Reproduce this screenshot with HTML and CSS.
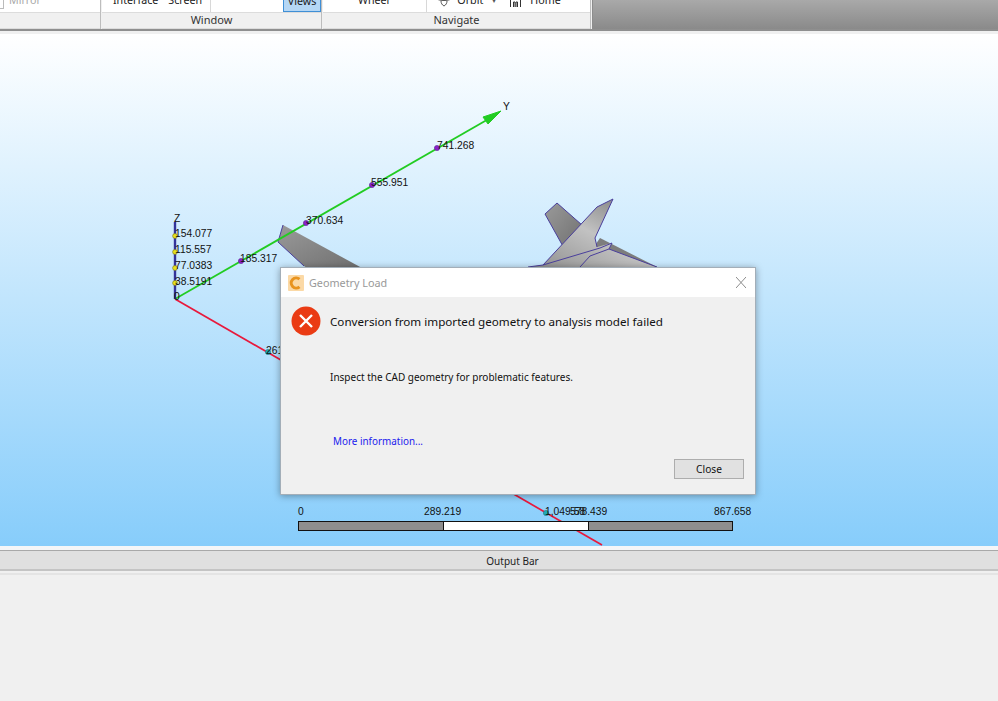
FILE: index.html
```html
<!DOCTYPE html>
<html lang="en">
<head>
  <meta charset="UTF-8" />
  <title>Geometry Load</title>
  <link rel="stylesheet" href="styles.css">
</head>
<body>
  <div class="ribbon">
    <div class="group group-edit">
      <div class="tools"><span class="checkbox"></span><span class="tool-muted">Mirror</span></div>
      <div class="group-label"></div>
    </div>
    <div class="group group-window">
      <div class="tools">
        <span class="tool tool-interface">Interface</span>
        <span class="tool tool-screen">Screen</span>
        <span class="tool-sep"></span>
        <span class="views-btn">Views</span>
      </div>
      <div class="group-label">Window</div>
    </div>
    <div class="group group-navigate">
      <div class="tools">
        <span class="tool tool-wheel">Wheel</span>
        <span class="tool-sep"></span>
        <svg class="tool-icon icon-orbit" width="16" height="8" viewBox="0 0 16 8"><path d="M1 0c3 2 11 2 14 0M5 2c0 2 1 4 3 5 2-1 3-3 3-5" fill="none" stroke="#555" stroke-width="1"/></svg>
        <span class="tool tool-orbit">Orbit</span>
        <span class="tool-arrow">▾</span>
        <svg class="tool-icon icon-home" width="11" height="7" viewBox="0 0 11 7"><path d="M.5 7V0M10.5 7V0M3.5 7V2h1.500v5M6 7V2h1.500v5" fill="none" stroke="#333" stroke-width="1"/></svg>
        <span class="tool tool-home">Home</span>
      </div>
      <div class="group-label">Navigate</div>
    </div>
    <div class="ribbon-empty"></div>
  </div>
  <div class="ribbon-strip"></div>

  <div class="viewport">
    <svg class="scene" width="998" height="512" viewBox="0 34 998 512">
      <defs>
        <linearGradient id="wingA" x1="0" y1="0" x2="1" y2="1">
          <stop offset="0" stop-color="#9a9a9a"/>
          <stop offset="1" stop-color="#6f6f6f"/>
        </linearGradient>
        <linearGradient id="wingB" x1="0" y1="1" x2="1" y2="0">
          <stop offset="0" stop-color="#8d8d8d"/>
          <stop offset="0.5" stop-color="#c2c2c2"/>
          <stop offset="1" stop-color="#6e6e6e"/>
        </linearGradient>
      </defs>

      <!-- model -->
      <path d="M283 225 L278 242 L304 266 L307 268 L362 268 Z" fill="url(#wingA)"/>
      <path d="M283 225 L278 242 L304 266" fill="none" stroke="#4a3f9c" stroke-width="1"/>
      <path d="M545 214 L557 203 L582 225 L565 250 Z" fill="url(#wingA)" stroke="#4a3f9c" stroke-width="1"/>
      <path d="M600 238 L657 267 L580 267 Z" fill="#7d7d7d"/>
      <path d="M528 267 L543 265 L597 207 L613 199 L595 238 L597 247 L612 243 L609 249 L657 267 L528 267 Z" fill="url(#wingB)"/>
      <path d="M528 267 L543 265 L597 207 L613 199 L595 238 L597 247 M543 265 L600 248 L612 243 L609 249 L657 267 M609 249 L590 256 L580 267" fill="none" stroke="#4a3f9c" stroke-width="1"/>

      <!-- axes -->
      <line x1="175" y1="299" x2="602" y2="545" stroke="#e8193c" stroke-width="1.7"/>
      <line x1="175" y1="299" x2="492" y2="117" stroke="#22cc22" stroke-width="1.8"/>
      <path d="M501 111 L483 117 L488 124 Z" fill="#22cc22" stroke="#22cc22" stroke-width="1"/>
      <line x1="175" y1="299" x2="175" y2="222" stroke="#33339a" stroke-width="2.4"/>

      <circle class="tick-y" cx="175" cy="236" r="2.4"/>
      <circle class="tick-y" cx="175" cy="252" r="2.4"/>
      <circle class="tick-y" cx="175" cy="268" r="2.4"/>
      <circle class="tick-y" cx="175" cy="283" r="2.4"/>
      <circle class="tick-p" cx="241" cy="261" r="2.6"/>
      <circle class="tick-p" cx="306" cy="223" r="2.6"/>
      <circle class="tick-p" cx="372" cy="185" r="2.6"/>
      <circle class="tick-p" cx="437" cy="148" r="2.6"/>
      <circle class="tick-t" cx="268" cy="352" r="2.6"/>
      <circle class="tick-t" cx="546" cy="513" r="2.6"/>

      <text x="174" y="222">Z</text>
      <text x="175" y="237">154.077</text>
      <text x="175" y="253">115.557</text>
      <text x="175" y="269">77.0383</text>
      <text x="175" y="285">38.5191</text>
      <text x="174" y="300">0</text>
      <text x="240" y="262">185.317</text>
      <text x="306" y="224">370.634</text>
      <text x="371" y="186">555.951</text>
      <text x="437" y="149">741.268</text>
      <text x="503" y="110">Y</text>
      <text x="266" y="354">261</text>

      <!-- scale bar -->
      <text x="298" y="515">0</text>
      <text x="424" y="515">289.219</text>
      <text x="545" y="515">1,049.58</text>
      <text x="570" y="515">578.439</text>
      <text x="714" y="515">867.658</text>
      <rect x="298.5" y="521.5" width="145" height="9" fill="#8e8e8e" stroke="#111"/>
      <rect x="443.5" y="521.5" width="145" height="9" fill="#fff" stroke="#111"/>
      <rect x="588.5" y="521.5" width="144" height="9" fill="#8e8e8e" stroke="#111"/>
    </svg>

    <div class="dialog">
      <div class="dialog-title">
        <svg class="app-icon" width="16" height="16" viewBox="0 0 16 16">
          <rect width="16" height="16" rx="1" fill="#fbd9a6"/>
          <path d="M11.5 4.2A5 5 0 1 0 11.500 11.800" fill="none" stroke="#e8931e" stroke-width="3"/>
        </svg>
        <span class="dialog-name">Geometry Load</span>
        <svg class="dialog-x" width="10" height="11" viewBox="0 0 10 11"><path d="M0 0L10 11M10 0L0 11" stroke="#8c8c8c" stroke-width="1"/></svg>
      </div>
      <div class="dialog-body">
        <div class="message">
          <svg class="error-icon" width="30" height="30" viewBox="0 0 30 30">
            <circle cx="15" cy="15" r="14.5" fill="#ea3b14"/>
            <path d="M9 9L21 21M21 9L9 21" stroke="#fff" stroke-width="2.4"/>
          </svg>
          <span class="message-text">Conversion from imported geometry to analysis model failed</span>
        </div>
        <p class="detail">Inspect the CAD geometry for problematic features.</p>
        <a class="more-link">More information...</a>
        <div class="dialog-actions"><button class="close-btn">Close</button></div>
      </div>
    </div>
  </div>

  <div class="splitter"></div>
  <div class="output-head">Output Bar</div>
  <div class="output-gap"></div>
  <div class="output-pane"></div>
</body>
</html>
```

FILE: styles.css
```css
html, body {
  margin: 0;
  height: 100%;
}
body {
  width: 998px;
  height: 701px;
  overflow: hidden;
  display: flex;
  flex-direction: column;
  background: #f0f0f0;
  font-family: 'Noto Sans', 'Open Sans', sans-serif;
  font-size: 11px;
  color: #1a1a1a;
}

/* ribbon, cut off at the top of the shot */
.ribbon {
  display: flex;
  height: 29px;
  flex: none;
  border-bottom: 2px solid #8f8f8f;
}
.group {
  display: flex;
  flex-direction: column;
  border-right: 1px solid #bdbdbd;
  margin-right: 1px;
}
.group-edit { width: 100px; }
.group-window { width: 219px; }
.group-navigate { width: 267px; }
.tools {
  height: 12px;
  display: flex;
  align-items: flex-end;
  overflow: hidden;
  background: #fff;
  border-bottom: 1px solid #dcdcdc;
  font-size: 10.7px;
  line-height: 12px;
}
.group-label {
  height: 15px;
  line-height: 13px;
  text-align: center;
  background: #f0f0f0;
  border-bottom: 1px solid #dcdcdc;
  color: #333;
}
.checkbox {
  width: 3px;
  height: 8px;
  margin-bottom: 3px;
  border: 1px solid #bbb;
  border-left: 0;
}
.tool-muted {
  color: #a8a8a8;
  margin: 0 0 6px 5px;
}
.tool {
  margin-bottom: 6px;
  white-space: nowrap;
}
.tool-interface { margin-left: 11px; }
.tool-screen { margin-left: 10px; }
.tool-sep {
  width: 1px;
  height: 12px;
  background: #d8d8d8;
}
.group-window .tool-sep { margin-left: 8px; }
.views-btn {
  margin-left: 72px;
  width: 36px;
  height: 11px;
  line-height: 3px;
  text-align: center;
  background: #b5d7f5;
  border: 1px solid #3f8fd6;
  border-top: 0;
}
.tool-wheel { margin-left: 35px; }
.group-navigate .tool-sep { margin-left: 37px; }
.tool-icon { flex: none; }
.icon-orbit { margin: 0 0 5px 9px; }
.tool-orbit { margin-left: 5px; }
.tool-arrow {
  margin: 0 0 6px 9px;
  font-size: 8px;
  color: #555;
}
.icon-home { margin: 0 0 5px 14px; }
.tool-home { margin-left: 9px; }
.ribbon-empty {
  flex: 1;
  background: linear-gradient(#a9a9a9, #8a8a8a);
  border-left: 1px solid #8c8c8c;
}
.ribbon-strip {
  height: 3px;
  flex: none;
  background: #f0f0f0;
}

/* 3d view */
.viewport {
  position: relative;
  height: 512px;
  flex: none;
  background: linear-gradient(#fff, #87cdfb);
  overflow: hidden;
}
.scene {
  display: block;
}
.scene text {
  font-family: 'Liberation Sans', Arial, sans-serif;
  font-size: 10.3px;
  fill: #111;
}
.tick-y { fill: #e8e21c; stroke: #77761a; stroke-width: 0.6; }
.tick-p { fill: #8a1fc9; stroke: #5a2a90; stroke-width: 0.6; }
.tick-t { fill: #22a9b5; stroke: #1b7a86; stroke-width: 0.6; }

/* dialog over the view */
.dialog {
  position: absolute;
  left: 280px;
  top: 233px;
  width: 476px;
  height: 228px;
  box-sizing: border-box;
  display: flex;
  flex-direction: column;
  border: 1px solid #a3aeb8;
  box-shadow: 0 1px 7px rgba(0, 0, 0, 0.35);
  background: #f0f0f0;
}
.dialog-title {
  height: 29px;
  flex: none;
  display: flex;
  align-items: center;
  background: #fff;
  padding: 0 9px 0 7px;
}
.dialog-name {
  margin-left: 5px;
  font-size: 10.8px;
  color: #999;
  flex: 1;
}
.dialog-body {
  flex: 1;
  display: flex;
  flex-direction: column;
  padding: 9px 11px 15px 10px;
}
.message {
  display: flex;
  align-items: center;
  gap: 9px;
}
.message-text {
  font-size: 11.65px;
  color: #111;
}
.detail {
  margin: 34px 0 0 39px;
  font-size: 10px;
  color: #111;
}
.more-link {
  margin: 50px 0 0 42px;
  color: #1a1aee;
  font-size: 9.9px;
}
.dialog-actions {
  display: flex;
  justify-content: flex-end;
  margin-top: auto;
}
.close-btn {
  width: 70px;
  height: 20px;
  padding: 0;
  background: #e1e1e1;
  border: 1px solid #adadad;
  font-family: inherit;
  font-size: 10.2px;
  color: #111;
}

/* output bar */
.splitter {
  height: 4px;
  flex: none;
  background: #f4f6f8;
  border-bottom: 1px solid #a9a9a9;
}
.output-head {
  height: 18px;
  line-height: 21px;
  font-size: 10px;
  flex: none;
  text-align: center;
  padding-left: 27px;
  background: #e0e0e0;
  border-bottom: 2px solid #c4c4c4;
  color: #222;
}
.output-gap {
  height: 2px;
  flex: none;
  background: #f0f0f0;
  border-bottom: 2px solid #e4e4e4;
}
.output-pane {
  flex: 1;
  background: #f0f0f0;
}
```
